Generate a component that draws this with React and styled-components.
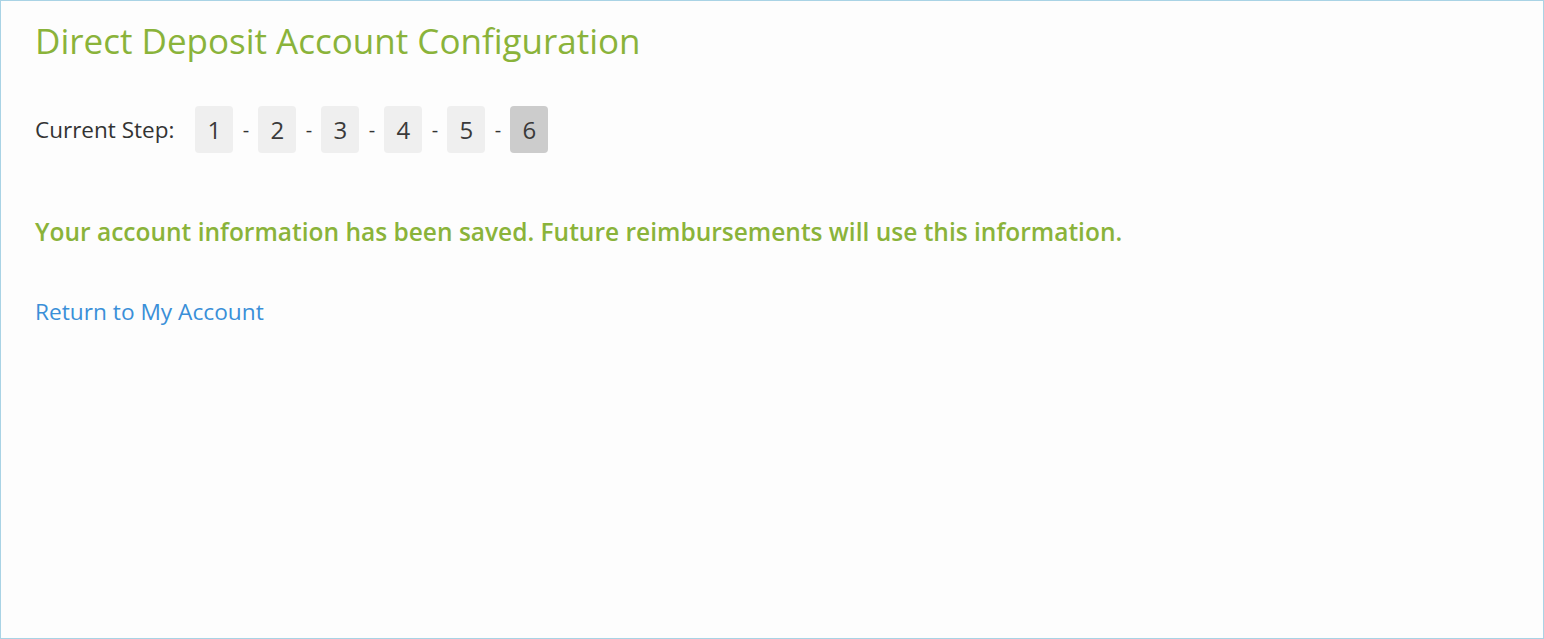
import React from "react";
import styled, { createGlobalStyle } from "styled-components";

const GlobalStyle = createGlobalStyle`
  html, body {
    margin: 0;
    padding: 0;
    background: #fdfdfd;
  }
  body {
    font-family: "Open Sans", "Liberation Sans", sans-serif;
    color: #333;
  }
`;

const Frame = styled.div`
  box-sizing: border-box;
  width: 1544px;
  height: 639px;
  border: 1px solid #a9d3e5;
  background: #fdfdfd;
  padding: 16px 34px;
`;

const Title = styled.h1`
  margin: 0;
  font-size: 35px;
  font-weight: 400;
  line-height: 48px;
  color: #8ab33a;
`;

const StepRow = styled.div`
  display: flex;
  align-items: center;
  margin-top: 41px;
  font-size: 22.5px;
`;

const StepLabel = styled.span`
  margin-right: 21px;
`;

const StepBox = styled.span`
  display: flex;
  align-items: center;
  justify-content: center;
  width: 38px;
  height: 47px;
  border-radius: 4px;
  background: ${(p) => (p.active ? "#cccccc" : "#efefef")};
  font-size: 24px;
  color: #3a3a3a;
`;

const Dash = styled.span`
  width: 25px;
  text-align: center;
  font-size: 20px;
`;

const Message = styled.p`
  margin: 63px 0 0;
  font-size: 24.5px;
  font-weight: 600;
  line-height: 32px;
  color: #8ab33a;
`;

const ReturnLink = styled.a`
  display: inline-block;
  margin-top: 48px;
  font-size: 22.7px;
  line-height: 32px;
  color: #3a8fd8;
  text-decoration: none;
  cursor: pointer;
`;

const steps = [1, 2, 3, 4, 5, 6];
const current = 6;

export default function App() {
  return (
    <>
      <GlobalStyle />
      <Frame>
        <Title>Direct Deposit Account Configuration</Title>
        <StepRow>
          <StepLabel>Current Step:</StepLabel>
          {steps.map((s, i) => (
            <React.Fragment key={s}>
              {i > 0 && <Dash>-</Dash>}
              <StepBox active={s === current}>{s}</StepBox>
            </React.Fragment>
          ))}
        </StepRow>
        <Message>
          Your account information has been saved. Future reimbursements will use this information.
        </Message>
        <ReturnLink>Return to My Account</ReturnLink>
      </Frame>
    </>
  );
}
